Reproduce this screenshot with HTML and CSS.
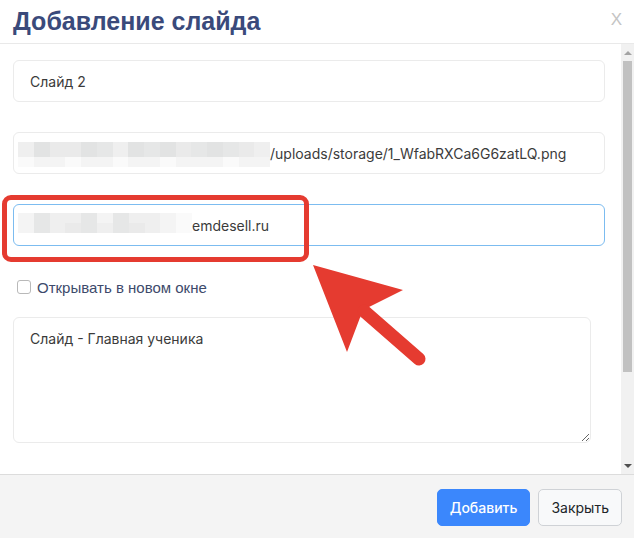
FILE: index.html
```html
<!DOCTYPE html>
<html lang="ru">
<head>
<meta charset="utf-8">
<title>Добавление слайда</title>
<link rel="stylesheet" href="styles.css">
</head>
<body>
<div class="modal">
  <header class="head">
    <h1 class="title">Добавление слайда</h1>
    <span class="close">X</span>
  </header>
  <div class="body">
    <div class="content">
      <input class="input" type="text" value="Слайд 2">
      <div class="input field">
        <div class="mosaic m16">
          <span class="s2"></span><span class="s5"></span><span class="s3"></span><span class="s3"></span><span class="s5"></span><span class="s4"></span><span class="s2"></span><span class="s5"></span><span class="s4"></span><span class="s5"></span><span class="s3"></span><span class="s4"></span><span class="s5"></span><span class="s4"></span><span class="s3"></span><span class="s2"></span>
          <span class="s0"></span><span class="s1"></span><span class="s1"></span><span class="s0"></span><span class="s1"></span><span class="s1"></span><span class="s0"></span><span class="s1"></span><span class="s1"></span><span class="s0"></span><span class="s1"></span><span class="s1"></span><span class="s1"></span><span class="s0"></span><span class="s1"></span><span class="s1"></span>
        </div>
        <span class="val">/uploads/storage/1_WfabRXCa6G6zatLQ.png</span>
      </div>
      <div class="input field focus">
        <div class="mosaic m11">
          <span class="s1"></span><span class="s4"></span><span class="s2"></span><span class="s2"></span><span class="s4"></span><span class="s1"></span><span class="s4"></span><span class="s2"></span><span class="s2"></span><span class="s1"></span><span class="s0"></span>
          <span class="s1"></span><span class="s4"></span><span class="s2"></span><span class="s3"></span><span class="s4"></span><span class="s2"></span><span class="s4"></span><span class="s3"></span><span class="s2"></span><span class="s1"></span><span class="s0"></span>
        </div>
        <span class="val">emdesell.ru</span>
      </div>
      <label class="check">
        <input class="cb" type="checkbox">
        <span>Открывать в новом окне</span>
      </label>
      <textarea class="area">Слайд - Главная ученика</textarea>
    </div>
    <div class="scrollbar">
      <div class="sb-btn sb-up"><span class="tri-up"></span></div>
      <div class="sb-track"><div class="thumb"></div></div>
      <div class="sb-btn sb-down"><span class="tri-down"></span></div>
    </div>
  </div>
  <footer class="foot">
    <button class="btn primary" type="button">Добавить</button>
    <button class="btn secondary" type="button">Закрыть</button>
  </footer>

  <div class="annot"></div>
  <svg class="arrow" width="140" height="120" viewBox="0 0 140 120">
    <polygon points="13,10 103,35 69,52 61,60 47,97" fill="#e53b30"/>
    <line x1="64" y1="56" x2="119" y2="104" stroke="#e53b30" stroke-width="13" stroke-linecap="round"/>
  </svg>
</div>
</body>
</html>
```

FILE: styles.css
```css
* { box-sizing: border-box; }
html, body { margin: 0; padding: 0; }
body {
  width: 634px;
  height: 538px;
  overflow: hidden;
  background: #fff;
  font-family: Inter, "Liberation Sans", Arial, sans-serif;
}
.modal {
  position: relative;
  width: 634px;
  height: 538px;
  display: flex;
  flex-direction: column;
}
.head {
  flex: none;
  height: 44px;
  border-bottom: 1px solid #e9e9e9;
  display: flex;
  align-items: center;
  justify-content: space-between;
  padding: 0 12px 0 13px;
}
.title {
  margin: 0;
  font: bold 25px/1 "Liberation Sans", Arial, sans-serif;
  color: #3a4a7b;
}
.close {
  font: 17px/1 "Liberation Sans", Arial, sans-serif;
  color: #c4c4c4;
  margin-top: -4px;
}
.body {
  flex: none;
  height: 430px;
  display: flex;
}
.content {
  flex: 1;
  padding: 16px 16px 0 13px;
}
.input {
  display: flex;
  align-items: center;
  width: 100%;
  height: 42px;
  margin: 0 0 30px;
  padding: 0 16px;
  border: 1px solid #ebebeb;
  border-radius: 6px;
  background: #fff;
  font: 14px Inter, "Liberation Sans", sans-serif;
  color: #3b3b3b;
  outline: none;
}
.field { padding-left: 4px; }
.focus { border-color: #7cbcf0; }
.val { white-space: nowrap; }
.mosaic {
  flex: none;
  display: grid;
}
.m16 {
  width: 252px;
  grid-template-columns: repeat(16, 1fr);
  grid-template-rows: 15px 10px;
  margin-top: 3px;
}
.m11 {
  width: 174px;
  grid-template-columns: repeat(11, 1fr);
  grid-template-rows: 10px 10px;
  margin-bottom: 4px;
}
.s0 { background: #fafafa; }
.s1 { background: #f4f4f4; }
.s2 { background: #efefef; }
.s3 { background: #eaeaea; }
.s4 { background: #e6e7e7; }
.s5 { background: #e2e3e3; }
.check {
  display: flex;
  align-items: center;
  gap: 6px;
  height: 16px;
  margin: 33px 0 22px 4px;
  font: 15px "Liberation Sans", Arial, sans-serif;
  color: #3d4a6b;
}
.cb {
  appearance: none;
  -webkit-appearance: none;
  margin: 0;
  width: 14px;
  height: 14px;
  border: 1px solid #b9b9b9;
  border-radius: 3px;
  background: #fff;
}
.area {
  display: block;
  width: 578px;
  height: 126px;
  margin: 0;
  padding: 12px 16px;
  border: 1px solid #ebebeb;
  border-radius: 6px;
  font: 14px Inter, "Liberation Sans", sans-serif;
  color: #3b3b3b;
  outline: none;
}
.scrollbar {
  flex: none;
  width: 13px;
  background: #f1f1f1;
  display: flex;
  flex-direction: column;
}
.sb-btn {
  flex: none;
  display: flex;
  align-items: center;
  justify-content: center;
}
.sb-up { height: 17px; }
.sb-down { height: 17px; }
.tri-up {
  width: 0; height: 0;
  border-left: 4px solid transparent;
  border-right: 4px solid transparent;
  border-bottom: 4px solid #a3a3a3;
}
.tri-down {
  width: 0; height: 0;
  border-left: 4px solid transparent;
  border-right: 4px solid transparent;
  border-top: 4px solid #505050;
}
.sb-track {
  flex: 1;
  padding: 0 2px;
}
.thumb {
  height: 311px;
  background: #c1c1c1;
}
.foot {
  flex: 1;
  background: #f4f4f4;
  border-top: 1px solid #dcdcdc;
  display: flex;
  justify-content: flex-end;
  align-items: flex-start;
  gap: 8px;
  padding: 14px 12px 0;
}
.btn {
  height: 37px;
  padding: 0 12px;
  border-radius: 5px;
  border: 1px solid;
  font: 14px Inter, "Liberation Sans", sans-serif;
}
.primary {
  background: #3b87fc;
  border-color: #3b87fc;
  color: #fff;
  font-weight: 500;
}
.secondary {
  background: #f8f9fa;
  border-color: #cfd2d6;
  color: #212529;
}
.annot {
  position: absolute;
  left: 2px;
  top: 195px;
  width: 307px;
  height: 67px;
  border: 5px solid #e53b30;
  border-radius: 9px;
}
.arrow {
  position: absolute;
  left: 300px;
  top: 255px;
}
```
